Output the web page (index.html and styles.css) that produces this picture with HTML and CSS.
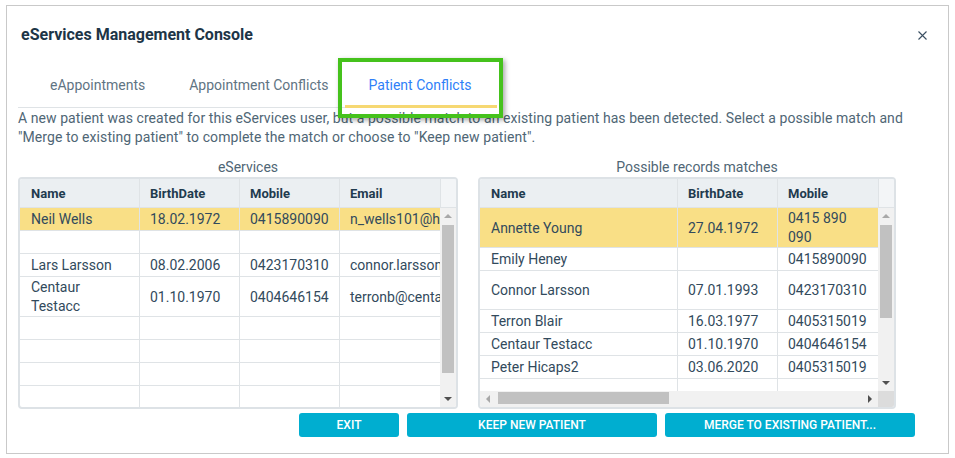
FILE: index.html
```html
<!DOCTYPE html>
<html lang="en">
<head>
    <meta charset="UTF-8">
    <title>eServices Management Console</title>
    <link rel="stylesheet" href="styles.css">
</head>
<body>
    <div class="dialog">
        <div class="dialog-header">
            <h2 class="dialog-title">eServices Management Console</h2>
            <span class="close-btn">
                <svg width="9" height="9" viewBox="0 0 9 9"><path d="M0.5 0.5 L8.5 8.5 M8.5 0.5 L0.5 8.5" stroke="#3b5062" stroke-width="1.1" fill="none"/></svg>
            </span>
        </div>

        <div class="tabs">
            <div class="tab">eAppointments</div>
            <div class="tab">Appointment Conflicts</div>
            <div class="tab active">Patient Conflicts<span class="tab-highlight"></span></div>
        </div>

        <p class="intro">A new patient was created for this eServices user, but a possible match to an existing patient has been detected. Select a possible match and<br>"Merge to existing patient" to complete the match or choose to "Keep new patient".</p>

        <div class="panels">
            <div class="panel">
                <div class="panel-title">eServices</div>
                <div class="grid grid-left">
                    <div class="grid-head">
                        <div class="cell">Name</div>
                        <div class="cell">BirthDate</div>
                        <div class="cell">Mobile</div>
                        <div class="cell">Email</div>
                        <div class="head-corner"></div>
                    </div>
                    <div class="grid-body">
                        <div class="rows">
                            <div class="row selected">
                                <div class="cell">Neil Wells</div>
                                <div class="cell">18.02.1972</div>
                                <div class="cell">0415890090</div>
                                <div class="cell">n_wells101@hotmail.com</div>
                            </div>
                            <div class="row">
                                <div class="cell"></div><div class="cell"></div><div class="cell"></div><div class="cell"></div>
                            </div>
                            <div class="row">
                                <div class="cell">Lars Larsson</div>
                                <div class="cell">08.02.2006</div>
                                <div class="cell">0423170310</div>
                                <div class="cell">connor.larsson@mail.com</div>
                            </div>
                            <div class="row">
                                <div class="cell">Centaur<br>Testacc</div>
                                <div class="cell">01.10.1970</div>
                                <div class="cell">0404646154</div>
                                <div class="cell">terronb@centaur.com</div>
                            </div>
                            <div class="row">
                                <div class="cell"></div><div class="cell"></div><div class="cell"></div><div class="cell"></div>
                            </div>
                            <div class="row">
                                <div class="cell"></div><div class="cell"></div><div class="cell"></div><div class="cell"></div>
                            </div>
                            <div class="row">
                                <div class="cell"></div><div class="cell"></div><div class="cell"></div><div class="cell"></div>
                            </div>
                            <div class="row">
                                <div class="cell"></div><div class="cell"></div><div class="cell"></div><div class="cell"></div>
                            </div>
                        </div>
                        <div class="vscroll">
                            <span class="arrow arrow-up"></span>
                            <div class="vtrack"><div class="vthumb thumb-left"></div></div>
                            <span class="arrow arrow-down"></span>
                        </div>
                    </div>
                </div>
            </div>

            <div class="panel">
                <div class="panel-title">Possible records matches</div>
                <div class="grid grid-right">
                    <div class="grid-head">
                        <div class="cell">Name</div>
                        <div class="cell">BirthDate</div>
                        <div class="cell">Mobile</div>
                        <div class="head-corner"></div>
                    </div>
                    <div class="grid-body">
                        <div class="rows">
                            <div class="row selected">
                                <div class="cell">Annette Young</div>
                                <div class="cell">27.04.1972</div>
                                <div class="cell">0415 890<br>090</div>
                            </div>
                            <div class="row">
                                <div class="cell">Emily Heney</div>
                                <div class="cell"></div>
                                <div class="cell">0415890090</div>
                            </div>
                            <div class="row tall">
                                <div class="cell">Connor Larsson</div>
                                <div class="cell">07.01.1993</div>
                                <div class="cell">0423170310</div>
                            </div>
                            <div class="row">
                                <div class="cell">Terron Blair</div>
                                <div class="cell">16.03.1977</div>
                                <div class="cell">0405315019</div>
                            </div>
                            <div class="row">
                                <div class="cell">Centaur Testacc</div>
                                <div class="cell">01.10.1970</div>
                                <div class="cell">0404646154</div>
                            </div>
                            <div class="row">
                                <div class="cell">Peter Hicaps2</div>
                                <div class="cell">03.06.2020</div>
                                <div class="cell">0405315019</div>
                            </div>
                            <div class="row">
                                <div class="cell"></div><div class="cell"></div><div class="cell"></div>
                            </div>
                        </div>
                        <div class="vscroll">
                            <span class="arrow arrow-up"></span>
                            <div class="vtrack"><div class="vthumb thumb-right"></div></div>
                            <span class="arrow arrow-down"></span>
                        </div>
                        <div class="hscroll">
                            <span class="arrow arrow-left"></span>
                            <div class="htrack"><div class="hthumb"></div></div>
                            <span class="arrow arrow-right"></span>
                        </div>
                        <div class="scroll-corner"></div>
                    </div>
                </div>
            </div>
        </div>

        <div class="actions">
            <button class="btn btn-exit">EXIT</button>
            <button class="btn btn-wide">KEEP NEW PATIENT</button>
            <button class="btn btn-wide">MERGE TO EXISTING PATIENT...</button>
        </div>
    </div>
</body>
</html>
```

FILE: styles.css
```css
body {
    margin: 0;
    padding: 5px 6px;
    background: #ffffff;
    font-family: Roboto, 'Liberation Sans', sans-serif;
}

.dialog {
    width: 943px;
    height: 449px;
    box-sizing: border-box;
    border: 1px solid #c9c9c9;
    padding: 0 31px 0 11px;
}

.dialog-header {
    display: flex;
    justify-content: space-between;
    align-items: flex-start;
    padding: 19px 0 0 3px;
    height: 35px;
}

.dialog-title {
    margin: 0;
    font-size: 16px;
    line-height: 20px;
    font-weight: 700;
    color: #1d3547;
}

.close-btn {
    display: block;
    width: 9px;
    height: 9px;
    margin: 6px -10px 0 0;
}

.close-btn svg {
    display: block;
}

/* tabs */
.tabs {
    display: inline-flex;
    border-bottom: 1px solid #dfe3e6;
    padding-left: 10px;
    position: relative;
    z-index: 2;
}

.tab {
    position: relative;
    padding: 15px 22px 12px;
    font-size: 14px;
    line-height: 20px;
    color: #5f7483;
}

.tab.active {
    margin-left: -4px;
    color: #2f7ff8;
}

.tab.active::after {
    content: '';
    position: absolute;
    left: -2px;
    right: -4px;
    bottom: -1px;
    height: 3px;
    background: #f6d872;
}

.tab-highlight {
    position: absolute;
    left: -9px;
    right: -10px;
    top: -2px;
    bottom: -11px;
    border: 4px solid #45c21c;
    box-shadow: 2px 2px 5px rgba(0, 0, 0, 0.35);
}

.intro {
    margin: 1px -24px 0 0;
    font-size: 14px;
    line-height: 19px;
    letter-spacing: 0.07px;
    color: #4f6675;
    white-space: nowrap;
}

/* panels */
.panels {
    display: grid;
    grid-template-columns: 460px 438px;
    margin-top: 10px;
}

.panel-title {
    text-align: center;
    font-size: 14px;
    line-height: 20px;
    color: #4f6675;
}

.grid {
    border: 2px solid #dde2e6;
    border-radius: 4px;
    overflow: hidden;
    font-size: 14px;
    color: #324a5c;
}

.grid-left {
    width: 440px;
    box-sizing: border-box;
    --cols: 120px 100px 100px 100px;
}

.grid-right {
    width: 418px;
    box-sizing: border-box;
    --cols: 198px 100px 100px;
}

.grid-head {
    display: grid;
    grid-template-columns: var(--cols) 16px;
    height: 29px;
    background: #ebeff2;
    border-bottom: 1px solid #dfe3e6;
    box-sizing: border-box;
    font-size: 13px;
    font-weight: 700;
    color: #1f3b4f;
}

.head-corner {
    background: #f3f5f7;
    border-left: 1px solid #dfe3e6;
}

.grid-head .cell {
    display: flex;
    align-items: center;
    padding: 1px 10px 0;
    border-right: 1px solid #dfe3e6;
}

.grid-head .cell:first-child {
    padding-left: 11px;
}

.grid-head .cell:nth-last-child(2) {
    border-right: none;
}

.grid-body {
    display: grid;
    grid-template-columns: 1fr 16px;
    height: 199px;
    overflow: hidden;
}

.grid-right .grid-body {
    grid-template-rows: 183px 16px;
}

.rows {
    overflow: hidden;
}

.row {
    display: grid;
    grid-template-columns: var(--cols);
    border-bottom: 1px solid #dfe3e6;
}

.row.selected {
    background: #f9df86;
}

.row .cell {
    display: flex;
    align-items: center;
    box-sizing: border-box;
    min-height: 22px;
    padding: 1px 10px 0;
    line-height: 19px;
    border-right: 1px solid #dfe3e6;
    white-space: nowrap;
    overflow: hidden;
}

.row .cell:first-child {
    padding-left: 11px;
}

.row .cell:last-child {
    border-right: none;
}

.row.tall .cell {
    min-height: 38px;
}

/* fake scrollbars */
.vscroll {
    display: flex;
    flex-direction: column;
    background: #f1f1f1;
}

.vtrack {
    flex: 1;
    padding: 1px 2px 0;
}

.vthumb {
    background: #c1c1c1;
}

.thumb-left {
    height: 148px;
}

.thumb-right {
    height: 93px;
}

.hscroll {
    display: flex;
    background: #f1f1f1;
}

.htrack {
    flex: 1;
    padding: 1px 0 2px 2px;
}

.hthumb {
    width: 171px;
    height: 12px;
    background: #c1c1c1;
}

.scroll-corner {
    background: #dcdcdc;
}

.arrow {
    position: relative;
    width: 16px;
    height: 16px;
    flex: none;
}

.arrow::before {
    content: '';
    position: absolute;
    left: 50%;
    top: 50%;
    width: 0;
    height: 0;
    transform: translate(-50%, -50%);
}

.arrow-up::before {
    border-left: 4px solid transparent;
    border-right: 4px solid transparent;
    border-bottom: 4px solid #a8a8a8;
}

.arrow-down::before {
    border-left: 4px solid transparent;
    border-right: 4px solid transparent;
    border-top: 4px solid #505050;
}

.arrow-left::before {
    border-top: 4px solid transparent;
    border-bottom: 4px solid transparent;
    border-right: 4px solid #a8a8a8;
}

.arrow-right::before {
    border-top: 4px solid transparent;
    border-bottom: 4px solid transparent;
    border-left: 4px solid #505050;
}

/* buttons */
.actions {
    display: flex;
    justify-content: flex-end;
    gap: 8px;
    margin-top: 4px;
    padding-right: 2px;
}

.btn {
    height: 24px;
    border: none;
    border-radius: 3px;
    background: #00aed0;
    color: #ffffff;
    font-family: Roboto, 'Liberation Sans', sans-serif;
    font-size: 12px;
    font-weight: 500;
    letter-spacing: 0;
    padding: 0;
}

.btn-exit {
    width: 100px;
}

.btn-wide {
    width: 250px;
}
```
